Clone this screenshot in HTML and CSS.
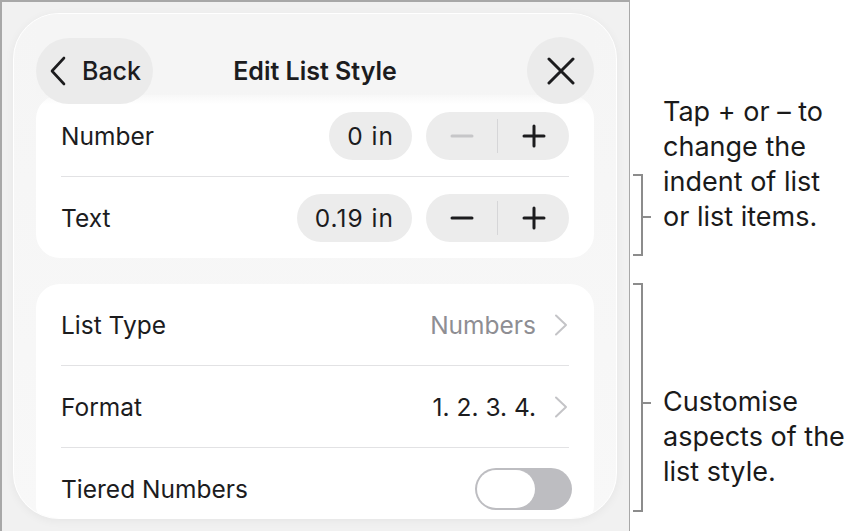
FILE: index.html
```html
<!DOCTYPE html>
<html lang="en">
<head>
    <meta charset="UTF-8">
    <meta name="viewport" content="width=device-width, initial-scale=1.0">
    <title>Edit List Style</title>
    <link rel="stylesheet" href="styles.css">
</head>
<body>
    <div class="page">
        <div class="device">
            <div class="sheet">
                <header class="sheet-header">
                    <button class="back-btn">
                        <svg width="18" height="30" viewBox="0 0 18 30"><path d="M15 2 L3 15 L15 28" fill="none" stroke="#1c1c1e" stroke-width="2.6" stroke-linecap="round" stroke-linejoin="round"/></svg>
                        <span>Back</span>
                    </button>
                    <h1 class="title">Edit List Style</h1>
                    <button class="close-btn">
                        <svg width="28" height="28" viewBox="0 0 28 28"><path d="M2 2 L26 26 M26 2 L2 26" fill="none" stroke="#1c1c1e" stroke-width="3" stroke-linecap="round"/></svg>
                    </button>
                </header>

                <section class="card indent-card">
                    <div class="row">
                        <span class="label">Number</span>
                        <div class="controls">
                            <span class="value-pill">0 in</span>
                            <div class="stepper">
                                <button class="step disabled">
                                    <svg width="24" height="24" viewBox="0 0 24 24"><path d="M2 12 H22" stroke="currentColor" stroke-width="3" stroke-linecap="round"/></svg>
                                </button>
                                <span class="step-sep"></span>
                                <button class="step">
                                    <svg width="24" height="24" viewBox="0 0 24 24"><path d="M2 12 H22 M12 2 V22" stroke="currentColor" stroke-width="3" stroke-linecap="round"/></svg>
                                </button>
                            </div>
                        </div>
                    </div>
                    <div class="row">
                        <span class="label">Text</span>
                        <div class="controls">
                            <span class="value-pill">0.19 in</span>
                            <div class="stepper">
                                <button class="step">
                                    <svg width="24" height="24" viewBox="0 0 24 24"><path d="M2 12 H22" stroke="currentColor" stroke-width="3" stroke-linecap="round"/></svg>
                                </button>
                                <span class="step-sep"></span>
                                <button class="step">
                                    <svg width="24" height="24" viewBox="0 0 24 24"><path d="M2 12 H22 M12 2 V22" stroke="currentColor" stroke-width="3" stroke-linecap="round"/></svg>
                                </button>
                            </div>
                        </div>
                    </div>
                </section>

                <section class="card">
                    <div class="row">
                        <span class="label">List Type</span>
                        <div class="controls">
                            <span class="detail muted">Numbers</span>
                            <svg class="chev" width="14" height="22" viewBox="0 0 14 22"><path d="M2 1.5 L12 11 L2 20.5" fill="none" stroke="#c4c4c7" stroke-width="2" stroke-linecap="round" stroke-linejoin="round"/></svg>
                        </div>
                    </div>
                    <div class="row">
                        <span class="label">Format</span>
                        <div class="controls">
                            <span class="detail">1. 2. 3. 4.</span>
                            <svg class="chev" width="14" height="22" viewBox="0 0 14 22"><path d="M2 1.5 L12 11 L2 20.5" fill="none" stroke="#c4c4c7" stroke-width="2" stroke-linecap="round" stroke-linejoin="round"/></svg>
                        </div>
                    </div>
                    <div class="row">
                        <span class="label">Tiered Numbers</span>
                        <div class="controls">
                            <span class="toggle"><span class="knob"></span></span>
                        </div>
                    </div>
                </section>
            </div>
        </div>

        <aside class="notes">
            <div class="callout callout-indent">
                <div class="bracket"></div>
                <p>Tap + or – to<br>change the<br>indent of list<br>or list items.</p>
            </div>
            <div class="callout callout-style">
                <div class="bracket"></div>
                <p>Customise<br>aspects of the<br>list style.</p>
            </div>
        </aside>
    </div>
</body>
</html>
```

FILE: styles.css
```css
body {
    margin: 0;
    background: #fff;
    font-family: Inter, "Noto Sans", sans-serif;
    color: #1c1c1e;
}
.page {
    display: flex;
    height: 531px;
    overflow: hidden;
}
.device {
    flex-shrink: 0;
    width: 630px;
    height: 560px;
    box-sizing: border-box;
    background: #f1f1f1;
    border-left: 2px solid #a8a8a8;
    border-top: 2px solid #a8a8a8;
    border-right: 1px solid #a8a8a8;
    padding: 11px 0 0 11px;
}
.sheet {
    width: 604px;
    height: 506px;
    box-sizing: border-box;
    background: linear-gradient(#f5f5f5, #f8f8f8);
    border: 1.5px solid #fff;
    border-radius: 46px;
    box-shadow: 0 2px 10px rgba(0, 0, 0, 0.05);
    padding: 0 22px;
    overflow: hidden;
}
.sheet-header {
    position: relative;
    z-index: 1;
    display: grid;
    grid-template-columns: 1fr auto 1fr;
    align-items: center;
    padding-top: 23px;
    background: linear-gradient(#f5f5f5 0, #f5f5f5 calc(100% - 12px), rgba(245, 245, 245, 0));
}
button {
    font-family: inherit;
    border: none;
    cursor: pointer;
    color: #1c1c1e;
}
.back-btn {
    justify-self: start;
    display: flex;
    align-items: center;
    gap: 15px;
    height: 66px;
    padding: 0 12px 0 13px;
    border-radius: 33px;
    background: #ebebeb;
    font-size: 25px;
    font-weight: 500;
}
.title {
    margin: 0;
    font-size: 25px;
    font-weight: 600;
}
.close-btn {
    justify-self: end;
    width: 67px;
    height: 67px;
    border-radius: 50%;
    background: #ebebeb;
    display: flex;
    align-items: center;
    justify-content: center;
    padding: 0;
}
.card {
    background: #fff;
    border-radius: 24px;
    padding: 0 25px;
}
.indent-card {
    margin-top: -9px;
}
.card + .card {
    margin-top: 26px;
}
.row {
    display: flex;
    align-items: center;
    justify-content: space-between;
    height: 81px;
    border-bottom: 1px solid #e2e2e4;
}
.row:last-child {
    border-bottom: none;
}
.label {
    font-size: 24.5px;
}
.controls {
    display: flex;
    align-items: center;
    gap: 14px;
}
.value-pill {
    height: 48px;
    line-height: 48px;
    padding: 0 18px;
    border-radius: 24px;
    background: #ececec;
    font-size: 24.5px;
    letter-spacing: 1px;
}
.stepper {
    display: flex;
    align-items: center;
    width: 143px;
    height: 48px;
    border-radius: 24px;
    background: #ececec;
}
.step {
    flex: 1;
    height: 100%;
    background: none;
    display: flex;
    align-items: center;
    justify-content: center;
    padding: 0;
    color: #1c1c1e;
}
.step.disabled {
    color: #c6c6c8;
}
.step-sep {
    width: 1px;
    height: 34px;
    background: #d6d6d8;
}
.detail {
    font-size: 24.5px;
}
.muted {
    color: #8e8e93;
}
.chev {
    margin-left: 4px;
    margin-right: 1px;
}
.toggle {
    display: block;
    width: 97px;
    height: 42px;
    border-radius: 21px;
    background: #bdbdc1;
    margin-right: -3px;
    padding: 2px;
    box-sizing: border-box;
}
.knob {
    display: block;
    width: 58px;
    height: 38px;
    border-radius: 19px;
    background: #fff;
}
.notes {
    display: flex;
    flex-direction: column;
    padding-left: 3px;
}
.callout {
    display: flex;
    align-items: flex-start;
}
.callout p {
    margin: 0 0 0 20px;
    font-size: 27px;
    line-height: 35px;
    color: #1a1a1a;
}
.bracket {
    position: relative;
    width: 8px;
    border: 2px solid #8c8c8c;
    border-left: none;
    flex-shrink: 0;
}
.bracket::after {
    content: "";
    position: absolute;
    left: 8px;
    width: 10px;
    height: 2px;
    background: #8c8c8c;
}
.callout-indent {
    margin-top: 94px;
}
.callout-indent .bracket {
    margin-top: 80px;
    height: 78px;
}
.callout-indent .bracket::after {
    top: 40px;
}
.callout-style {
    margin-top: 27px;
}
.callout-style .bracket {
    height: 225px;
}
.callout-style p {
    margin-top: 101px;
}
.callout-style .bracket::after {
    top: 117px;
}
```
